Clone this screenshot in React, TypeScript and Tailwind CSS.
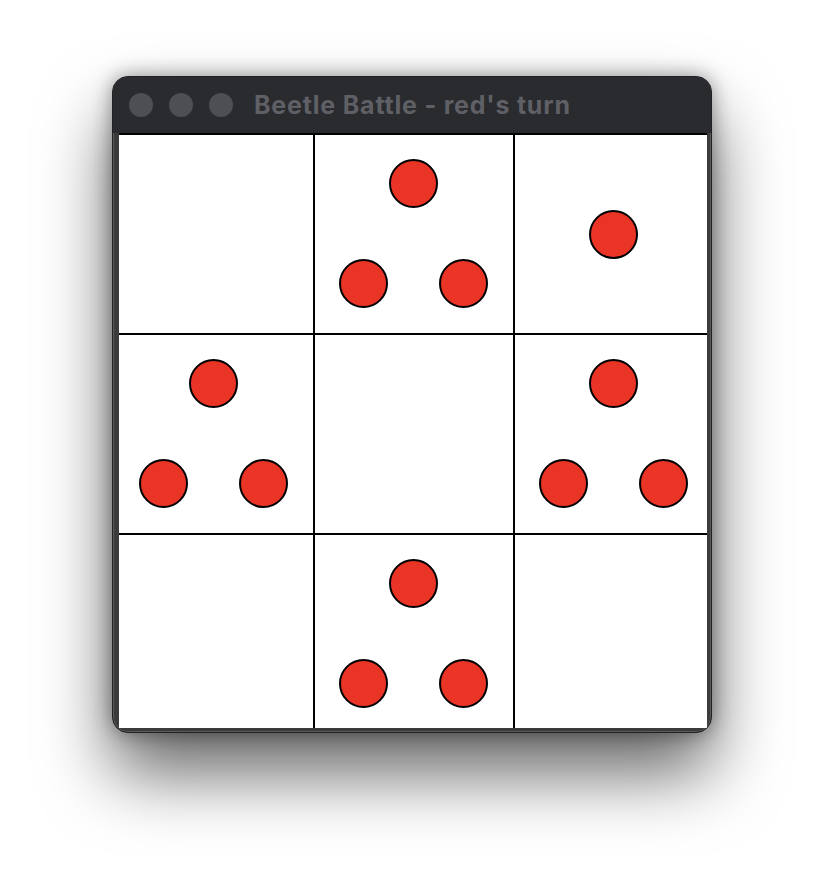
import React from "react";

type Cell = 0 | 1 | 3;
const board: Cell[] = [0, 3, 1, 3, 0, 3, 0, 3, 0];

function Beetle() {
  return <div className="w-[49px] h-[49px] rounded-full border-2 border-black bg-[#ea3426] box-border" />;
}

function BoardCell({ n }: { n: Cell }) {
  return (
    <div className="w-[200px] h-[200px] border-l-2 border-t-2 border-black box-border bg-white">
      {n === 1 && (
        <div className="w-full h-full flex items-center justify-center pr-[2px]">
          <Beetle />
        </div>
      )}
      {n === 3 && (
        <div className="w-full h-full flex flex-col items-center pt-[24px] gap-[51px] pr-[2px]">
          <Beetle />
          <div className="flex gap-[51px]">
            <Beetle />
            <Beetle />
          </div>
        </div>
      )}
    </div>
  );
}

export default function App() {
  return (
    <div className="w-[824px] h-[880px] bg-white flex justify-center pt-[76px]" style={{ fontFamily: "Inter, 'Noto Sans', sans-serif" }}>
      <div className="w-[600px] h-[657px] rounded-[16px] overflow-hidden bg-[#3b3b3c] border border-[#222224] flex flex-col shadow-[0_40px_70px_rgba(0,0,0,0.6),0_0_20px_rgba(0,0,0,0.4),inset_0_0_0_1px_#5a5a5c]">
        <div className="h-[56px] shrink-0 bg-[#2a2b2f] flex items-center pl-[16px] gap-[16px]">
          <div className="w-[24px] h-[24px] rounded-full bg-[#4e4f54]" />
          <div className="w-[24px] h-[24px] rounded-full bg-[#4e4f54]" />
          <div className="w-[24px] h-[24px] rounded-full bg-[#4e4f54]" />
          <span className="ml-[5px] text-[25px] font-bold text-[#5f6065] leading-none tracking-[0.8px]">Beetle Battle - red's turn</span>
        </div>
        <div className="flex-1 pl-[6px] pr-[4px] pb-[4px] min-h-0">
          <div className="w-full h-full bg-white overflow-hidden">
            <div className="w-[600px] grid grid-cols-3 ml-[-6px]">
              {board.map((n, i) => (
                <BoardCell key={i} n={n} />
              ))}
            </div>
          </div>
        </div>
      </div>
    </div>
  );
}
